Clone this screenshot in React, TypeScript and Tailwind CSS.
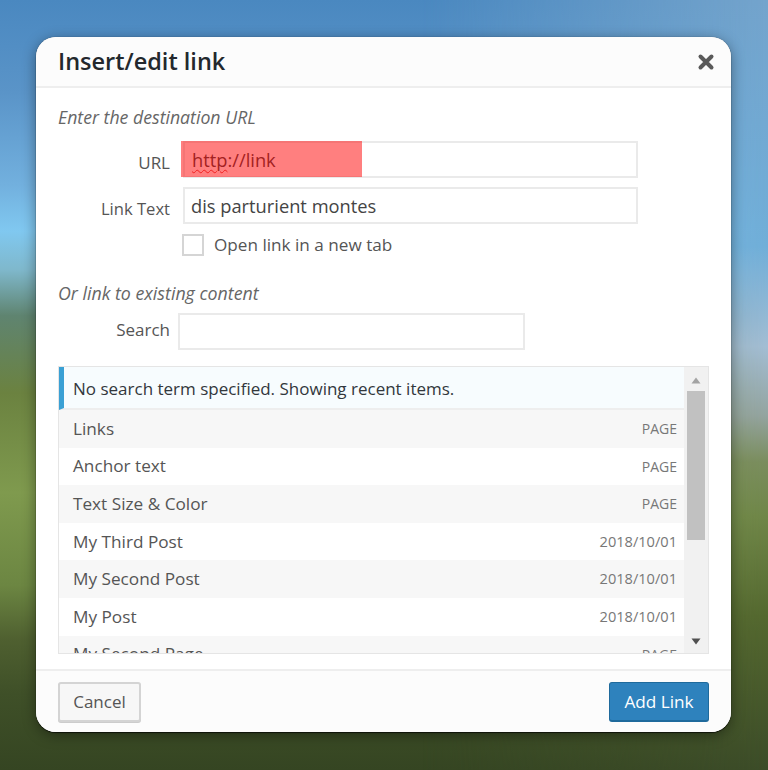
import React from "react";

const rows = [
  ["Links", "PAGE"],
  ["Anchor text", "PAGE"],
  ["Text Size & Color", "PAGE"],
  ["My Third Post", "2018/10/01"],
  ["My Second Post", "2018/10/01"],
  ["My Post", "2018/10/01"],
  ["My Second Page", "PAGE"],
];

export default function App() {
  return (
    <div
      className="relative h-[770px] w-[768px] overflow-hidden pl-[36px] pt-[37px] bg-[linear-gradient(180deg,#4a88c0_0%,#5a94c8_12%,#72b0de_24%,#80c8f0_30%,#7fb8cc_35%,#5f8470_41%,#6b8240_51%,#7f9a4e_64%,#6c8642_76%,#4f6030_83%,#3f5028_90%,#354522_100%)]"
      style={{ fontFamily: '"Open Sans", "Noto Sans", sans-serif' }}
    >
      <div className="pointer-events-none absolute inset-0 bg-[linear-gradient(180deg,#74a4cc_0%,#70aed8_32%,#a3bdd4_45%,#94a4a0_54%,#7a8d5e_60%,#6f8648_67%,#54682f_80%,#3c4c28_100%)] [mask-image:linear-gradient(90deg,transparent_55%,black_100%)]" />
      <div className="relative flex h-[695px] w-[695px] flex-col overflow-hidden rounded-[20px] bg-white shadow-[0_1px_1px_rgba(0,0,0,0.65),0_0_1px_rgba(0,0,0,0.5),0_3px_14px_rgba(0,0,0,0.4)]">
        <div className="flex h-[51px] shrink-0 items-center justify-between border-b-2 border-[#eeeeee] bg-[#fcfcfc] pl-[22px] pr-[16px] pt-[1px]">
          <span className="text-[23.5px] font-semibold leading-none text-[#23282d]">Insert/edit link</span>
          <svg width="18" height="18" viewBox="0 0 18 18">
            <path d="M3.5 3.5 L14.5 14.5 M14.5 3.5 L3.5 14.5" stroke="#5a5a5a" strokeWidth="4" strokeLinecap="round" />
          </svg>
        </div>

        <div className="flex min-h-0 flex-1 flex-col pl-[22px] pr-[22px]">
          <p className="mt-[18px] text-[17.7px] italic leading-[22px] text-[#666666]">Enter the destination URL</p>

          <div className="mt-[13px] flex items-center">
            <label className="w-[112px] pt-[6px] text-right text-[17px] leading-[22px] text-[#555555]">URL</label>
            <div className="relative ml-[13px] h-[37px] w-[455px] border-2 border-[#eaeaea] bg-white pl-[7px] text-[18.3px] leading-[33px] text-[#444444]">
              <span className="underline decoration-[#e04040] decoration-wavy decoration-1 underline-offset-2">http</span>
              ://link
              <div className="absolute left-[-4px] top-[-2px] h-[36px] w-[181px] bg-[rgba(255,0,0,0.5)]" />
            </div>
          </div>

          <div className="mt-[9px] flex items-center">
            <label className="w-[112px] pt-[6px] text-right text-[16.6px] leading-[22px] text-[#555555]">Link Text</label>
            <div className="ml-[13px] h-[37px] w-[455px] border-2 border-[#eaeaea] bg-white pl-[6px] text-[18.3px] leading-[33px] text-[#444444]">
              dis parturient montes
            </div>
          </div>

          <div className="mt-[10px] flex items-center pl-[124px]">
            <span className="h-[22px] w-[22px] border-2 border-[#d5d5d5] bg-white" />
            <span className="ml-[10px] text-[17.15px] leading-[22px] text-[#555555]">Open link in a new tab</span>
          </div>

          <p className="mt-[26px] text-[17.8px] italic leading-[22px] text-[#666666]">Or link to existing content</p>

          <div className="mt-[9px] flex items-center">
            <label className="w-[112px] pb-[3px] text-right text-[17px] leading-[22px] text-[#555555]">Search</label>
            <div className="ml-[8px] h-[37px] w-[347px] border-2 border-[#eaeaea] bg-white" />
          </div>

          <div className="mt-[16px] flex h-[288px] w-[651px] overflow-hidden border-[1.5px] border-[#e5e5e5]">
            <div className="w-[625px] shrink-0 overflow-hidden">
              <div className="flex h-[43px] items-center border-b-2 border-[#eeeeee] border-l-[5px] border-l-[#3aa0d4] bg-[#f7fcfe] pl-[9px] pt-[3px] text-[17px] text-[#32373c]">
                No search term specified. Showing recent items.
              </div>
              {rows.map(([title, info], i) => (
                <div
                  key={title}
                  className={
                    i % 2 === 0
                      ? "flex h-[37.6px] items-center justify-between bg-[#f7f7f7] pl-[14px] pr-[7px]"
                      : "flex h-[37.6px] items-center justify-between bg-white pl-[14px] pr-[7px]"
                  }
                >
                  <span className="text-[17.2px] text-[#555555]">{title}</span>
                  <span className={info === "PAGE" ? "text-[14px] text-[#777777]" : "text-[14.6px] text-[#777777]"}>{info}</span>
                </div>
              ))}
            </div>
            <div className="flex w-[24px] shrink-0 flex-col items-center justify-between bg-[#f1f1f1] pb-[8px] pt-[10px]">
              <div className="flex flex-col items-center">
                <svg width="10" height="7" viewBox="0 0 10 7"><path d="M5 0.5 L9.5 6.5 H0.5 Z" fill="#a3a3a3" /></svg>
                <div className="mt-[7px] h-[149px] w-[18px] bg-[#c1c1c1]" />
              </div>
              <svg width="10" height="7" viewBox="0 0 10 7"><path d="M5 6.5 L9.5 0.5 H0.5 Z" fill="#505050" /></svg>
            </div>
          </div>
        </div>

        <div className="flex h-[63px] shrink-0 items-start justify-between border-t-2 border-[#eeeeee] bg-[#fcfcfc] px-[22px] pt-[11px]">
          <button className="h-[40px] w-[83px] rounded-[3px] border-2 border-[#d4d4d4] bg-[#f7f7f7] text-[17px] text-[#555555] shadow-[0_1px_0_#cccccc]">
            Cancel
          </button>
          <button className="h-[40px] w-[100px] rounded-[3px] border border-b-2 border-[#1f6a9c] bg-[#2e82bd] text-[17.2px] text-white">
            Add Link
          </button>
        </div>
      </div>
    </div>
  );
}
